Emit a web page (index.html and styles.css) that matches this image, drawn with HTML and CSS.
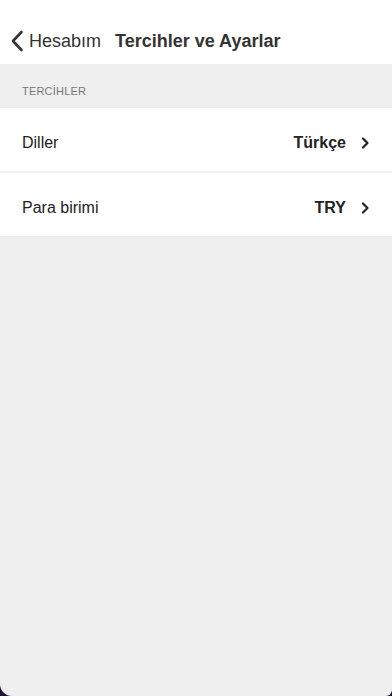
FILE: index.html
```html
<!DOCTYPE html>
<html lang="tr">
<head>
<meta charset="utf-8">
<meta name="viewport" content="width=device-width, initial-scale=1">
<title>Tercihler ve Ayarlar</title>
<link rel="stylesheet" href="styles.css">
</head>
<body>
<div class="screen">
  <header class="nav">
    <div class="back">
      <svg class="back-icon" width="14" height="22" viewBox="0 0 14 22" aria-hidden="true">
        <path d="M11.5 2 L3 11 L11.5 20" fill="none" stroke="#333" stroke-width="2.6" stroke-linecap="round" stroke-linejoin="round"/>
      </svg>
      <span class="back-label">Hesabım</span>
    </div>
    <h1 class="title">Tercihler ve Ayarlar</h1>
  </header>
  <div class="section-head">TERCİHLER</div>
  <div class="list">
    <div class="row">
      <span class="row-label">Diller</span>
      <span class="row-value">Türkçe</span>
      <svg class="chev" width="10" height="14" viewBox="0 0 10 14" aria-hidden="true">
        <path d="M3 2.5 L7.5 7 L3 11.5" fill="none" stroke="#222" stroke-width="2.2" stroke-linecap="round" stroke-linejoin="round"/>
      </svg>
    </div>
    <div class="row">
      <span class="row-label">Para birimi</span>
      <span class="row-value">TRY</span>
      <svg class="chev" width="10" height="14" viewBox="0 0 10 14" aria-hidden="true">
        <path d="M3 2.5 L7.5 7 L3 11.5" fill="none" stroke="#222" stroke-width="2.2" stroke-linecap="round" stroke-linejoin="round"/>
      </svg>
    </div>
  </div>
  <div class="fill"></div>
</div>
</body>
</html>
```
FILE: styles.css
```css
html, body {
  margin: 0;
  padding: 0;
  height: 100%;
  background: #1c1232;
}
body {
  font-family: "Liberation Sans", Arial, sans-serif;
  color: #222;
}
.screen {
  height: 696px;
  display: flex;
  flex-direction: column;
  background: #efefef;
  border-bottom-left-radius: 12px;
  border-bottom-right-radius: 6px;
  overflow: hidden;
}
.nav {
  height: 64px;
  background: #fff;
  display: flex;
  align-items: center;
  padding: 18px 0 0 10px;
  box-sizing: border-box;
}
.back {
  display: flex;
  align-items: center;
  gap: 5px;
}
.back-icon {
  display: block;
}
.back-label {
  font-size: 18px;
  color: #333;
}
.title {
  margin: 0 0 0 14px;
  font-size: 18px;
  font-weight: bold;
  color: #333;
}
.section-head {
  height: 44px;
  display: flex;
  align-items: center;
  padding: 10px 22px 0;
  box-sizing: border-box;
  font-size: 11px;
  color: #777;
  letter-spacing: 0.2px;
}
.list {
  display: flex;
  flex-direction: column;
  gap: 2px;
  background: #f3f3f3;
}
.row {
  height: 63px;
  box-sizing: border-box;
  background: #fff;
  display: flex;
  align-items: center;
  padding: 7px 22px 0 22px;
}
.row-label {
  flex: 1;
  font-size: 16px;
  color: #222;
}
.row-value {
  font-size: 16px;
  font-weight: bold;
  color: #222;
  margin-right: 14px;
}
.chev {
  display: block;
}
.fill {
  flex: 1;
}
```
